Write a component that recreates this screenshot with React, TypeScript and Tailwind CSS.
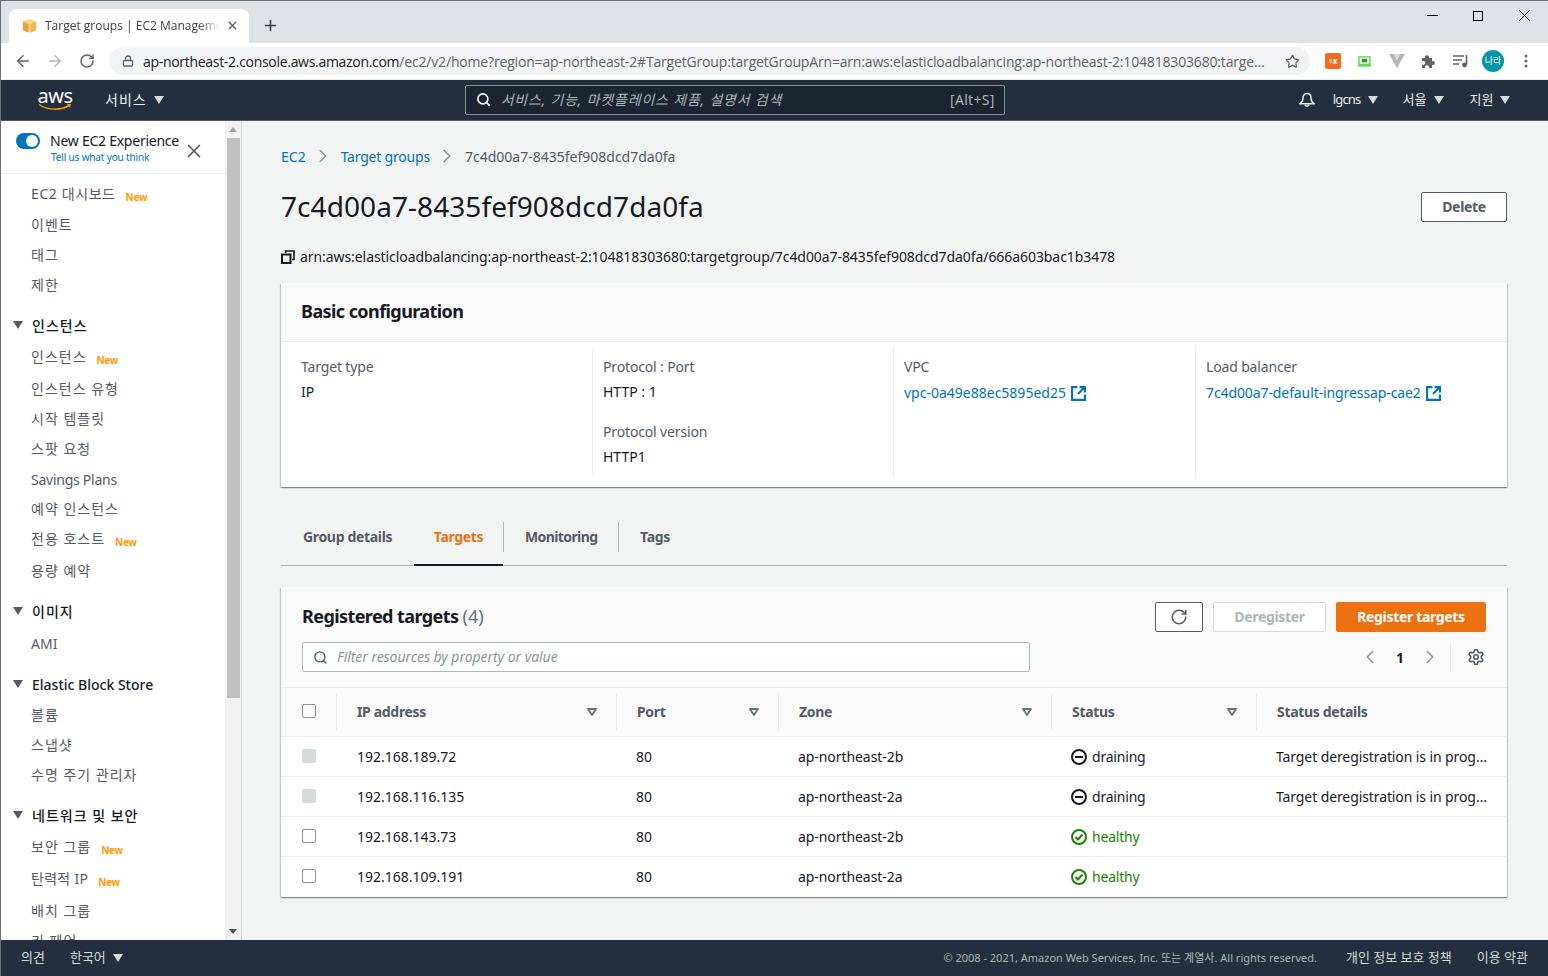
import {ArrowLeft, ArrowRight, ChevronLeft, ChevronRight, Lock, Plus, RotateCw, Search, Settings, Star, X} from 'lucide-react'

function Caret({className = 'w-[10px] h-[8px] text-[#d5dbdb]'}: {className?: string}) {
  return (
    <svg viewBox="0 0 10 8" className={className}>
      <path d="M0 0h10L5 8z" fill="currentColor" />
    </svg>
  )
}

function FilterCaret() {
  return (
    <svg viewBox="0 0 10 8" className="w-[10px] h-[8px] text-[#687078]">
      <path d="M1 1h8L5 7z" fill="none" stroke="currentColor" strokeWidth="1.8" strokeLinejoin="round" />
    </svg>
  )
}

function Favicon() {
  return (
    <svg viewBox="0 0 16 16" className="w-[15px] h-[15px] shrink-0">
      <path d="M1 3.5 8 1l7 2.5L8 6z" fill="#fbd38a" />
      <path d="M1 3.5V13l6.3 2.6V6z" fill="#f0a22e" />
      <path d="M15 3.5V13l-6.3 2.6V6z" fill="#f6b440" />
    </svg>
  )
}

function ExtIcons() {
  return (
    <div className="flex items-center">
      <div className="w-4 h-4 rounded-[2px] bg-[#f26b21] flex items-center justify-center text-white text-[8px] font-bold leading-none ml-[2px]">
        <span className="w-[3px] h-[4px] bg-[#f9b48c] mr-px" />x
      </div>
      <svg viewBox="0 0 14 12" className="w-[13px] h-[11px] ml-[17px]">
        <rect x="1" y="1" width="12" height="8" fill="none" stroke="#4cd137" strokeWidth="1.4" />
        <rect x="4" y="3" width="6" height="4" fill="#2f9e22" />
        <rect x="0" y="10" width="14" height="1.5" fill="#4cd137" />
      </svg>
      <svg viewBox="0 0 16 14" className="w-4 h-[14px] ml-[18px]">
        <path d="M0 0h5l3 6 3-6h5L8 14z" fill="#b5b5b5" />
        <path d="M5 0h6L8 6z" fill="#d8d8d8" />
      </svg>
      <svg viewBox="0 0 16 16" className="w-4 h-4 ml-[16px]">
        <path
          d="M1 5h3.2a2 2 0 1 1 3.6 0H11v3.2a2 2 0 1 1 0 3.6V15H7.8a2 2 0 1 0-3.6 0H1v-3.4a2 2 0 1 0 0-3.4z"
          fill="#5f6368"
        />
      </svg>
      <svg viewBox="0 0 16 14" className="w-4 h-[14px] ml-[16px]">
        <path d="M0 2h11M0 6h9M0 10h6" stroke="#5f6368" strokeWidth="1.4" fill="none" />
        <path d="M13.5 1v9.5" stroke="#5f6368" strokeWidth="1.6" />
        <circle cx="11.5" cy="11" r="2.4" fill="#5f6368" />
      </svg>
      <div className="w-[22px] h-[22px] rounded-full bg-[#0097a7] text-white text-[9px] flex items-center justify-center ml-[13px]">
        나라
      </div>
      <svg viewBox="0 0 4 14" className="w-1 h-[14px] ml-[20px]">
        <circle cx="2" cy="2" r="1.5" fill="#5f6368" />
        <circle cx="2" cy="7" r="1.5" fill="#5f6368" />
        <circle cx="2" cy="12" r="1.5" fill="#5f6368" />
      </svg>
    </div>
  )
}

function BrowserChrome() {
  return (
    <>
      <div className="h-[42px] bg-[#dee1e6] flex items-end pl-[8px] relative shrink-0">
        <div className="w-[240px] h-[34px] bg-white rounded-t-[8px] flex items-center pl-[13px] pr-[10px] pb-px text-[12px] text-[#3c4043]">
          <Favicon />
          <span className="ml-[8px] w-[175px] shrink-0 whitespace-nowrap overflow-hidden font-['Open_Sans',sans-serif] [mask-image:linear-gradient(to_right,black_88%,transparent)]">
            Target groups | EC2 Management Console
          </span>
          <X size={13} strokeWidth={2.6} className="ml-[6px] text-[#5f6368]" />
        </div>
        <Plus size={17} strokeWidth={2.2} className="ml-[13px] mb-[9px] text-[#3c4043]" />
        <div className="absolute right-[13px] top-[4px] flex items-center text-black">
          <div className="w-[11px] h-px bg-black mr-[35px]" />
          <div className="w-[10px] h-[10px] border border-black mr-[31px]" />
          <X size={21} strokeWidth={1.1} />
        </div>
      </div>
      <div className="h-[37px] bg-white flex items-center shrink-0 border-b border-[#e8eaed]">
        <ArrowLeft size={18} strokeWidth={2} className="ml-[13px] text-[#5f6368]" />
        <ArrowRight size={18} strokeWidth={2} className="ml-[14px] text-[#b4b7ba]" />
        <RotateCw size={16} strokeWidth={2.2} className="ml-[15px] text-[#5f6368]" />
        <div className="ml-[14px] w-[1201px] h-[28px] bg-[#f1f3f4] rounded-full flex items-center pl-[13px] pr-[10px]">
          <Lock size={12} strokeWidth={2.6} className="text-[#5f6368] shrink-0" />
          <span className="ml-[9px] w-[1125px] truncate text-[14px] text-[#5f6368] font-['Open_Sans',sans-serif] tracking-[-0.17px]">
            <span className="text-[#202124] tracking-[-0.3px]">ap-northeast-2.console.aws.amazon.com</span>
            /ec2/v2/home?region=ap-northeast-2#TargetGroup:targetGroupArn=arn:aws:elasticloadbalancing:ap-northeast-2:104818303680:targetgroup
          </span>
          <Star size={15} strokeWidth={2} className="ml-auto text-[#5f6368] shrink-0" />
        </div>
        <div className="ml-[13px]">
          <ExtIcons />
        </div>
      </div>
    </>
  )
}

function AwsNav() {
  return (
    <div className="h-[41px] bg-[#232f3e] border-b border-[#545b64] flex items-center pb-px text-[#eaeded] text-[13px] shrink-0 relative">
      <div className="ml-[37px] w-[34px] flex flex-col items-center relative h-[28px]">
        <span className="text-[20px] leading-[20px] text-white tracking-[-0.5px]">aws</span>
        <svg viewBox="0 0 34 8" className="w-[34px] h-[8px] absolute left-0 top-[17px]">
          <path d="M1 1.5c9 6 22 6 30 1" stroke="#f90" strokeWidth="1.5" fill="none" />
          <path d="M29 1h4l-1 3.5z" fill="#f90" />
        </svg>
      </div>
      <span className="ml-[33px] text-[14px] tracking-[1px]">서비스</span>
      <Caret className="w-[10px] h-[8px] ml-[7px] text-[#d5dbdb]" />
      <div className="ml-[301px] w-[540px] h-[30px] bg-[#1b2430] border border-[#879596] rounded-[2px] flex items-center pl-[10px] pr-[9px]">
        <Search size={15} strokeWidth={2.6} className="text-white" />
        <span className="ml-[10px] italic text-[#aab7b8] text-[14px] tracking-[0.8px]">서비스, 기능, 마켓플레이스 제품, 설명서 검색</span>
        <span className="ml-auto text-[14px] tracking-[0.3px] text-[#aab7b8]">[Alt+S]</span>
      </div>
      <svg viewBox="0 0 16 16" className="w-4 h-4 ml-[294px] text-[#eaeded]">
        <path
          d="M8 1.5c-2.6 0-4 1.9-4 4.4 0 3-1.3 4.4-3 5.8h14c-1.7-1.4-3-2.8-3-5.8 0-2.5-1.4-4.4-4-4.4z"
          fill="none"
          stroke="currentColor"
          strokeWidth="1.5"
        />
        <path d="M5.8 12.5a2.3 2.3 0 0 0 4.4 0" fill="none" stroke="currentColor" strokeWidth="1.5" />
      </svg>
      <span className="ml-[18px] tracking-[-0.8px]">lgcns</span>
      <Caret className="w-[10px] h-[8px] ml-[7px] text-[#d5dbdb]" />
      <span className="ml-[25px]">서울</span>
      <Caret className="w-[10px] h-[8px] ml-[8px] text-[#d5dbdb]" />
      <span className="ml-[25px]">지원</span>
      <Caret className="w-[10px] h-[8px] ml-[7px] text-[#d5dbdb]" />
    </div>
  )
}

type NavItem = {label: string; mt: string; tr?: string; isNew?: boolean; group?: boolean}

const navItems: NavItem[] = [
  {label: 'EC2 대시보드', mt: '', tr: 'tracking-[0.6px]', isNew: true},
  {label: '이벤트', mt: 'mt-px'},
  {label: '태그', mt: ''},
  {label: '제한', mt: ''},
  {label: '인스턴스', mt: 'mt-[11px]', group: true},
  {label: '인스턴스', mt: 'mt-px', isNew: true},
  {label: '인스턴스 유형', mt: 'mt-[2px]'},
  {label: '시작 템플릿', mt: ''},
  {label: '스팟 요청', mt: ''},
  {label: 'Savings Plans', mt: 'mt-px', tr: 'tracking-[-0.25px]'},
  {label: '예약 인스턴스', mt: '-mt-px'},
  {label: '전용 호스트', mt: '', isNew: true},
  {label: '용량 예약', mt: 'mt-[2px]'},
  {label: '이미지', mt: 'mt-[11px]', group: true},
  {label: 'AMI', mt: 'mt-[2px]', tr: 'tracking-normal'},
  {label: 'Elastic Block Store', mt: 'mt-[11px]', tr: 'tracking-normal', group: true},
  {label: '볼륨', mt: ''},
  {label: '스냅샷', mt: ''},
  {label: '수명 주기 관리자', mt: ''},
  {label: '네트워크 및 보안', mt: 'mt-[11px]', group: true},
  {label: '보안 그룹', mt: 'mt-px', isNew: true},
  {label: '탄력적 IP', mt: 'mt-[2px]', tr: 'tracking-[0.3px]', isNew: true},
  {label: '배치 그룹', mt: 'mt-[2px]'},
  {label: '키 페어', mt: ''}
]

function Sidebar() {
  return (
    <aside className="w-[241px] shrink-0 flex bg-white border-r border-[#d5dbdb] overflow-hidden">
      <div className="w-[224px] shrink-0 overflow-hidden">
        <div className="h-[53px] border-b border-[#eaeded] relative pl-[15px] pt-[12px]">
          <div className="w-[24px] h-[16px] rounded-full bg-[#0073bb] flex items-center justify-end pr-[2px]">
            <span className="w-[12px] h-[12px] rounded-full bg-white" />
          </div>
          <div className="absolute left-[49px] top-[11px] text-[14px] leading-[17px] tracking-[-0.25px] text-[#16191f] whitespace-nowrap">
            New EC2 Experience
          </div>
          <div className="absolute left-[50px] top-[30px] text-[10px] leading-[13px] tracking-[-0.15px] text-[#0073bb] whitespace-nowrap">
            Tell us what you think
          </div>
          <X size={22} strokeWidth={1.8} className="absolute left-[182px] top-[19px] text-[#545b64]" />
        </div>
        <div className="pt-[4px]">
          {navItems.map((item, i) => (
            <div key={i} className={`h-[30px] flex items-center text-[14px] whitespace-nowrap ${item.mt}`}>
              {item.group ? (
                <>
                  <Caret className="w-[10px] h-[8px] ml-[12px] text-[#545b64]" />
                  <span className={`ml-[9px] font-medium text-[#16191f] ${item.tr ?? 'tracking-[1px]'}`}>{item.label}</span>
                </>
              ) : (
                <>
                  <span className={`ml-[30px] text-[#545b64] ${item.tr ?? 'tracking-[1px]'}`}>{item.label}</span>
                  {item.isNew && (
                    <span className="ml-[10px] mt-[8px] text-[10px] font-bold tracking-[-0.3px] text-[#ff9900]">New</span>
                  )}
                </>
              )}
            </div>
          ))}
        </div>
      </div>
      <div className="w-[16px] bg-[#f1f1f1] flex flex-col items-center">
        <svg viewBox="0 0 8 5" className="w-2 h-[5px] mt-[6px] text-[#a3a3a3]">
          <path d="M0 5h8L4 0z" fill="currentColor" />
        </svg>
        <div className="w-[13px] h-[560px] bg-[#c1c1c1] mt-[6px]" />
        <svg viewBox="0 0 8 5" className="w-2 h-[5px] mt-auto mb-[6px] text-[#505050]">
          <path d="M0 0h8L4 5z" fill="currentColor" />
        </svg>
      </div>
    </aside>
  )
}

function External() {
  return (
    <svg viewBox="0 0 14 14" className="w-[15px] h-[15px] ml-[5px] shrink-0 text-[#0073bb]">
      <path d="M6 1H1v12h12V8" fill="none" stroke="currentColor" strokeWidth="2" />
      <path d="M8 1h5v5M13 1 6.5 7.5" fill="none" stroke="currentColor" strokeWidth="2" />
    </svg>
  )
}

function BasicConfig() {
  const label = 'text-[14px] leading-[20px] text-[#545b64] tracking-[-0.15px]'
  const value = 'text-[14px] leading-[20px] text-[#16191f]'
  const link = 'text-[14px] leading-[20px] text-[#0073bb]'
  return (
    <section className="mt-[17px] bg-white shadow-[0_1px_1px_0_rgba(0,28,36,0.3),1px_1px_1px_0_rgba(0,28,36,0.15),-1px_1px_1px_0_rgba(0,28,36,0.15)]">
      <div className="h-[59px] bg-[#fafafa] border-b border-[#eaeded] flex items-center px-[20px] pb-[2px]">
        <h2 className="text-[18px] font-bold tracking-[-0.58px] text-[#16191f]">Basic configuration</h2>
      </div>
      <div className="h-[145px] grid grid-cols-[311px_301px_302px_1fr] pt-[5px] pb-[10px]">
        <div className="pl-[20px] pt-[10px]">
          <div className={label}>Target type</div>
          <div className={`${value} mt-[5px]`}>IP</div>
        </div>
        <div className="pl-[10px] pt-[10px] border-l border-[#eaeded]">
          <div className={label}>Protocol : Port</div>
          <div className={`${value} mt-[5px]`}>HTTP : 1</div>
          <div className={`${label} mt-[20px]`}>Protocol version</div>
          <div className={`${value} mt-[5px]`}>HTTP1</div>
        </div>
        <div className="pl-[10px] pt-[10px] border-l border-[#eaeded]">
          <div className={label}>VPC</div>
          <div className={`${link} mt-[6px] flex items-center`}>
            vpc-0a49e88ec5895ed25
            <External />
          </div>
        </div>
        <div className="pl-[10px] pt-[10px] border-l border-[#eaeded]">
          <div className={label}>Load balancer</div>
          <div className={`${link} mt-[6px] flex items-center tracking-[-0.1px]`}>
            7c4d00a7-default-ingressap-cae2
            <External />
          </div>
        </div>
      </div>
    </section>
  )
}

function Tabs() {
  return (
    <div className="mt-[33px] h-[46px] border-b border-[#aab7b8] flex text-[14px] font-bold tracking-[-0.33px] text-[#545b64]">
      <div className="h-[46px] w-[133px] pl-[22px] pb-[14px] flex items-center">Group details</div>
      <div className="h-[46px] w-[89px] pb-[12px] flex items-center justify-center text-[#ec7211] border-b-2 border-[#16191f]">
        Targets
      </div>
      <div className="h-[30px] self-start mt-[2px] w-px bg-[#aab7b8]" />
      <div className="h-[46px] w-[114px] pl-[21px] pb-[14px] flex items-center tracking-[-0.6px]">Monitoring</div>
      <div className="h-[30px] self-start mt-[2px] w-px bg-[#aab7b8]" />
      <div className="h-[46px] pl-[21px] pb-[14px] flex items-center">Tags</div>
    </div>
  )
}

const cols = 'grid grid-cols-[55px_280px_162px_273px_205px_1fr] pl-px'

const targets = [
  {ip: '192.168.189.72', zone: 'ap-northeast-2b', status: 'draining', disabled: true},
  {ip: '192.168.116.135', zone: 'ap-northeast-2a', status: 'draining', disabled: true},
  {ip: '192.168.143.73', zone: 'ap-northeast-2b', status: 'healthy', disabled: false},
  {ip: '192.168.109.191', zone: 'ap-northeast-2a', status: 'healthy', disabled: false}
]

function StatusIcon({status}: {status: string}) {
  if (status === 'draining') {
    return (
      <svg viewBox="0 0 16 16" className="w-4 h-4 shrink-0 text-[#16191f]">
        <circle cx="8" cy="8" r="7" fill="none" stroke="currentColor" strokeWidth="2" />
        <path d="M4 8h8" stroke="currentColor" strokeWidth="2" />
      </svg>
    )
  }
  return (
    <svg viewBox="0 0 16 16" className="w-4 h-4 shrink-0 text-[#1d8102]">
      <circle cx="8" cy="8" r="7" fill="none" stroke="currentColor" strokeWidth="2" />
      <path d="m4.5 8 2.5 2.5 4.5-5" fill="none" stroke="currentColor" strokeWidth="2" />
    </svg>
  )
}

function HeaderCell({label, filter = true, last = false}: {label: string; filter?: boolean; last?: boolean}) {
  return (
    <div className={`h-[36px] flex items-center pl-[20px] pb-[2px] ${last ? '' : 'pr-[19px] border-r border-[#eaeded]'}`}>
      <span className="font-bold tracking-[-0.33px] text-[#545b64]">{label}</span>
      {filter && (
        <span className="ml-auto mt-[2px]">
          <FilterCaret />
        </span>
      )}
    </div>
  )
}

function TargetsCard() {
  return (
    <section className="mt-[21px] bg-white text-[14px] shadow-[0_1px_1px_0_rgba(0,28,36,0.3),1px_1px_1px_0_rgba(0,28,36,0.15),-1px_1px_1px_0_rgba(0,28,36,0.15)]">
      <div className="bg-[#fafafa] h-[101px] border-b border-[#eaeded] pl-[21px] pr-[21px] pt-[15px]">
        <div className="flex items-start">
          <h2 className="-mt-px text-[18px] leading-[30px] font-bold tracking-[-0.58px] text-[#16191f]">
            Registered targets <span className="font-normal tracking-normal text-[#687078]">(4)</span>
          </h2>
          <button className="ml-auto w-[48px] h-[30px] border border-[#545b64] rounded-[2px] bg-white flex items-center justify-center">
            <RotateCw size={18} strokeWidth={2} className="text-[#545b64]" />
          </button>
          <button className="ml-[10px] w-[113px] h-[30px] pb-[2px] border border-[#d5dbdb] rounded-[2px] bg-white font-bold tracking-[-0.33px] text-[#aab7b8]">
            Deregister
          </button>
          <button className="ml-[10px] w-[150px] h-[30px] pb-[2px] rounded-[2px] bg-[#ec7211] font-bold tracking-[-0.33px] text-white">
            Register targets
          </button>
        </div>
        <div className="mt-[10px] flex items-center">
          <div className="w-[728px] h-[30px] bg-white border border-[#aab7b8] rounded-[2px] flex items-center pl-[10px]">
            <Search size={15} strokeWidth={2.2} className="text-[#545b64]" />
            <span className="ml-[9px] mb-[2px] italic tracking-[-0.05px] text-[#879596]">Filter resources by property or value</span>
          </div>
          <ChevronLeft size={22} strokeWidth={1.6} className="ml-[329px] text-[#879596]" />
          <span className="ml-[15px] w-[8px] text-center font-bold text-[#16191f]">1</span>
          <ChevronRight size={22} strokeWidth={1.6} className="ml-[15px] text-[#879596]" />
          <div className="ml-[9px] w-px h-[30px] bg-[#eaeded]" />
          <Settings size={18} strokeWidth={2.2} className="ml-[16px] text-[#545b64]" />
        </div>
      </div>
      <div className={`${cols} h-[49px] bg-[#fafafa] border-b border-[#eaeded] items-center`}>
        <div className="h-[36px] border-r border-[#eaeded] flex items-center pl-[20px] pb-[2px]">
          <span className="w-[14px] h-[14px] bg-white border border-[#879596] rounded-[2px]" />
        </div>
        <HeaderCell label="IP address" />
        <HeaderCell label="Port" />
        <HeaderCell label="Zone" />
        <HeaderCell label="Status" />
        <HeaderCell label="Status details" filter={false} last />
      </div>
      {targets.map((t) => (
        <div key={t.ip} className={`${cols} h-[40px] items-center border-b border-[#eaeded] last:border-b-0 last:pb-px text-[#16191f]`}>
          <div className="pl-[20px] flex mb-[2px]">
            <span
              className={`w-[14px] h-[14px] rounded-[2px] ${t.disabled ? 'bg-[#d5dbdb]' : 'bg-white border border-[#879596]'}`}
            />
          </div>
          <div className="pl-[20px]">{t.ip}</div>
          <div className="pl-[19px]">80</div>
          <div className="pl-[19px] tracking-[-0.07px]">{t.zone}</div>
          <div className="pl-[19px] flex items-center">
            <StatusIcon status={t.status} />
            <span className={`ml-[5px] tracking-[-0.2px] ${t.status === 'healthy' ? 'text-[#1d8102]' : ''}`}>{t.status}</span>
          </div>
          <div className="pl-[19px] pr-[20px] truncate tracking-[-0.1px]">
            {t.status === 'draining' ? 'Target deregistration is in progress' : ''}
          </div>
        </div>
      ))}
    </section>
  )
}

function Footer() {
  return (
    <div className="h-[36px] bg-[#232f3e] flex items-center text-[12px] text-[#d5dbdb] shrink-0">
      <span className="ml-[20px] text-[13px]">의견</span>
      <span className="ml-[25px] text-[13px]">한국어</span>
      <Caret className="w-[10px] h-[8px] ml-[7px] text-[#d5dbdb]" />
      <span className="ml-auto text-[#aab7b8] text-[11px]">© 2008 - 2021, Amazon Web Services, Inc. 또는 계열사. All rights reserved.</span>
      <span className="ml-[29px] text-[13px]">개인 정보 보호 정책</span>
      <span className="ml-[25px] mr-[20px] text-[13px]">이용 약관</span>
    </div>
  )
}

export default function App() {
  return (
    <div className="w-[1548px] h-[976px] flex flex-col overflow-hidden border-t border-l border-[#6b6f73] bg-[#f2f3f3] font-['Noto_Sans','Noto_Sans_CJK_KR',sans-serif]">
      <BrowserChrome />
      <AwsNav />
      <div className="flex flex-1 min-h-0">
        <Sidebar />
        <main className="flex-1 pl-[39px] pr-[41px] overflow-hidden">
          <nav className="mt-[25px] h-[20px] flex items-center text-[14px]">
            <span className="text-[#0073bb]">EC2</span>
            <ChevronRight size={22} strokeWidth={1.6} className="ml-[6px] mr-[7px] text-[#879596]" />
            <span className="text-[#0073bb] tracking-[-0.2px]">Target groups</span>
            <ChevronRight size={22} strokeWidth={1.6} className="ml-[6px] mr-[7px] text-[#879596]" />
            <span className="text-[#545b64]">7c4d00a7-8435fef908dcd7da0fa</span>
          </nav>
          <div className="mt-[22px] flex items-start">
            <h1 className="text-[28px] leading-[36px] tracking-[0.07px] text-[#16191f]">7c4d00a7-8435fef908dcd7da0fa</h1>
            <button className="ml-auto mt-[4px] w-[86px] h-[30px] pb-[2px] border border-[#545b64] rounded-[2px] bg-white text-[14px] font-bold tracking-[-0.33px] text-[#545b64]">
              Delete
            </button>
          </div>
          <div className="mt-[22px] h-[20px] flex items-center text-[14px] tracking-[-0.07px] text-[#16191f]">
            <svg viewBox="0 0 14 14" className="w-[14px] h-[14px] mr-[5px] mt-px">
              <path d="M1 4.5h8.5V13H1z" fill="none" stroke="#16191f" strokeWidth="2" />
              <path d="M4.5 3V1H13v8.5h-2" fill="none" stroke="#16191f" strokeWidth="1.6" />
            </svg>
            arn:aws:elasticloadbalancing:ap-northeast-2:104818303680:targetgroup/7c4d00a7-8435fef908dcd7da0fa/666a603bac1b3478
          </div>
          <BasicConfig />
          <Tabs />
          <TargetsCard />
        </main>
      </div>
      <Footer />
    </div>
  )
}
